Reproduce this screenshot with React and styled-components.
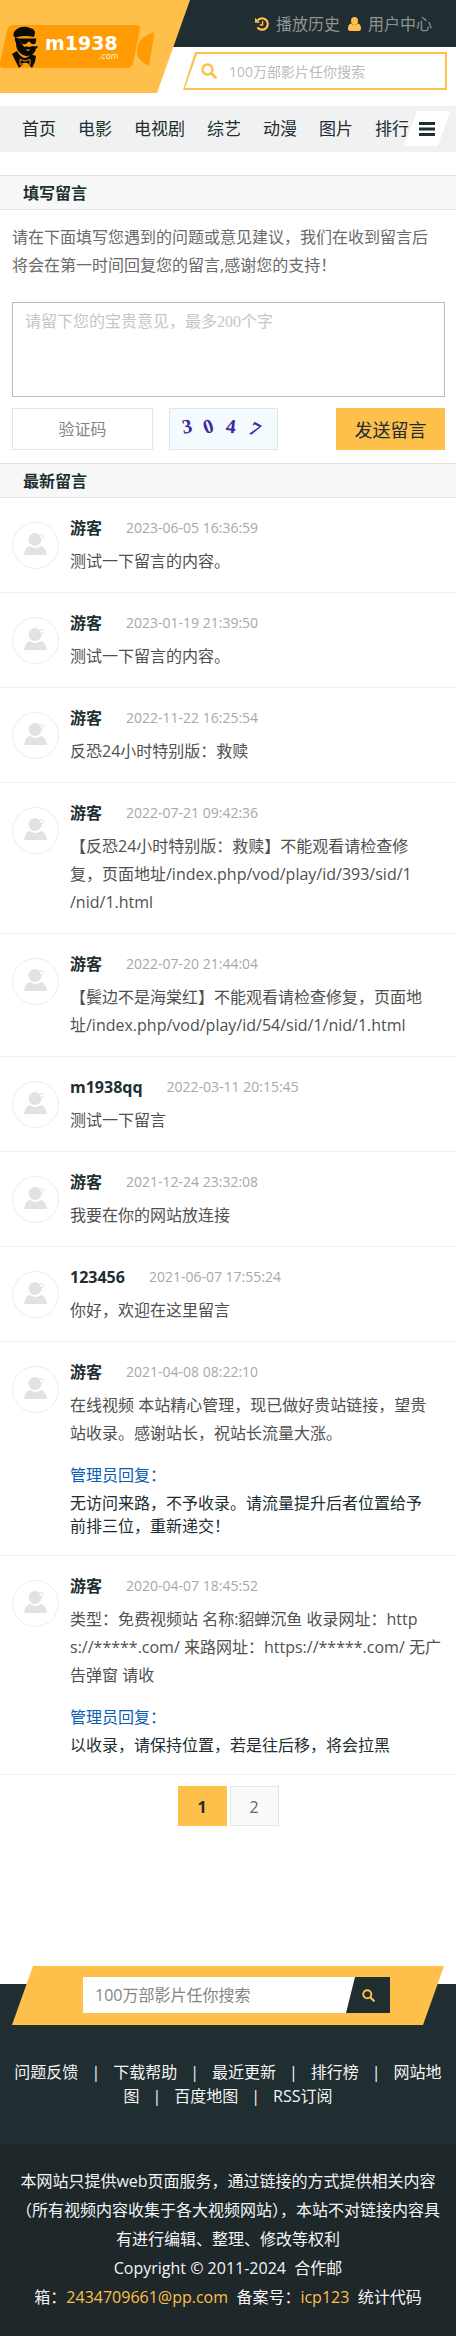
import React from 'react';
import styled, { createGlobalStyle, css } from 'styled-components';

const DARK = '#202d31';
const YELLOW = '#ffbf4b';

const GlobalStyle = createGlobalStyle`
  * {
    box-sizing: border-box;
  }
  body {
    margin: 0;
    background: #fff;
    color: ${DARK};
    font-family: 'Open Sans', 'Noto Sans CJK SC', sans-serif;
    font-size: 16px;
  }
  a {
    color: inherit;
    text-decoration: none;
  }
  button,
  input,
  textarea {
    font: inherit;
    border: 0;
    border-radius: 0;
    outline: 0;
  }
`;

const Header = styled.header`
  display: flex;
  height: 93px;
  background: linear-gradient(${DARK} 47px, #fff 47px);
`;

const LogoLink = styled.a`
  flex: none;
  width: 190px;
  background: ${YELLOW};
  clip-path: polygon(0 0, 100% 0, 157px 100%, 0 100%);
`;

const HeaderSide = styled.div`
  display: flex;
  flex: 1;
  flex-direction: column;
  min-width: 0;
  margin-left: -7px;
  padding-right: 9px;
`;

const UserLinks = styled.div`
  display: flex;
  justify-content: flex-end;
  gap: 8px;
  height: 47px;
  padding-right: 15px;
  color: #8f9494;
  line-height: 48px;
`;

const UserLink = styled.a`
  display: flex;
  align-items: center;
  gap: 7px;
`;

const slant = css`
  clip-path: polygon(12px 0, 100% 0, 100% 100%, 0 100%);
`;

const TopSearch = styled.form`
  display: flex;
  height: 38px;
  margin-top: 5px;
  padding: 2px;
  background: ${YELLOW};
  ${slant}
`;

const TopSearchInner = styled.div`
  display: flex;
  flex: 1;
  align-items: center;
  min-width: 0;
  padding-left: 16px;
  background: #fff;
  ${slant}
`;

const IconButton = styled.button`
  display: flex;
  flex: none;
  align-items: center;
  justify-content: center;
  padding: 0;
  background: none;
`;

const TopInput = styled.input`
  flex: 1;
  min-width: 0;
  padding: 0 12px;
  background: none;
  font-size: 14px;
  &::placeholder {
    color: #bcbcbc;
    opacity: 1;
  }
`;

const Nav = styled.nav`
  position: relative;
  height: 46px;
  margin-top: 13px;
  background: #f1f1f1;
`;

const NavList = styled.div`
  display: flex;
  gap: 22px;
  padding-left: 22px;
  overflow: hidden;
  font-size: 17px;
  line-height: 46px;
  white-space: nowrap;
`;

const MenuButton = styled.button`
  position: absolute;
  top: 5px;
  right: 6px;
  display: flex;
  align-items: center;
  justify-content: center;
  width: 46px;
  height: 35px;
  padding: 0;
  background: #fff;
  clip-path: polygon(13px 0, 100% 0, 34px 100%, 0 100%);
`;

const FormSection = styled.section`
  margin-top: 23px;
`;

const SectionTitle = styled.h2`
  height: 35px;
  margin: 0;
  padding-left: 23px;
  border-top: 1px solid #e2e2e2;
  border-bottom: 1px solid #e2e2e2;
  background: #f8f8f8;
  font-size: 16px;
  line-height: 35px;
`;

const MessageForm = styled.form`
  padding: 13px 11px 13px 12px;
`;

const Tip = styled.p`
  margin: 0;
  color: #6a6a6a;
  line-height: 28px;
  white-space: pre-line;
`;

const Message = styled.textarea`
  display: block;
  width: 100%;
  height: 95px;
  margin: 23px 0 11px;
  padding: 7px 12px;
  border: 1px solid #bdbdbd;
  font-family: 'Liberation Serif', 'Noto Sans CJK SC', serif;
  line-height: 24px;
  resize: none;
  &::placeholder {
    color: #c6c6c6;
    opacity: 1;
  }
`;

const FormRow = styled.div`
  display: flex;
  height: 42px;
`;

const CodeInput = styled.input`
  width: 141px;
  margin-right: 16px;
  border: 1px solid #e5e5e5;
  text-align: center;
  &::placeholder {
    color: #858585;
    opacity: 1;
  }
`;

const Captcha = styled.svg`
  width: 109px;
  height: 42px;
  border: 1px solid #e5e5e5;
  background: #f4fbff;
`;

const SendButton = styled.button`
  width: 109px;
  margin-left: auto;
  padding: 0;
  background: ${YELLOW};
  color: ${DARK};
  font-size: 18px;
`;

const Item = styled.article`
  display: flex;
  gap: 11px;
  padding: 16px 12px 17px;
  border-bottom: 1px solid #f0f0f0;
`;

const Avatar = styled.svg`
  flex: none;
  width: 47px;
  height: 47px;
  margin-top: 8px;
`;

const ItemBody = styled.div`
  flex: 1;
  min-width: 0;
`;

const Meta = styled.div`
  display: flex;
  align-items: center;
  gap: 24px;
  height: 28px;
  margin-bottom: 5px;
`;

const Name = styled.strong`
  line-height: 28px;
`;

const Time = styled.time`
  color: #a8a8a8;
  font-size: 14px;
  line-height: 28px;
`;

const Content = styled.p`
  margin: 0;
  color: #505050;
  line-height: 28px;
  white-space: pre-line;
`;

const ReplyLabel = styled.div`
  margin-top: 14px;
  color: #0c5eb5;
  line-height: 28px;
`;

const Reply = styled.p`
  margin: 3px 0 0;
  line-height: 23px;
  white-space: pre-line;
`;

const Pages = styled.div`
  display: flex;
  justify-content: center;
  gap: 3px;
  padding: 11px 0 140px;
`;

const Page = styled.a`
  width: 49px;
  height: 40px;
  border: 1px solid ${(p) => (p.$active ? YELLOW : '#e5e5e5')};
  background: ${(p) => (p.$active ? YELLOW : '#fafafa')};
  color: ${(p) => (p.$active ? DARK : '#666')};
  font-weight: ${(p) => (p.$active ? 700 : 400)};
  line-height: 40px;
  text-align: center;
`;

const Footer = styled.footer`
  background: linear-gradient(#fff 18px, ${DARK} 18px);
  color: #f4f4f4;
  text-align: center;
`;

const FooterBar = styled.div`
  height: 59px;
  margin: 0 12px;
  padding: 11px 54px 12px 71px;
  background: ${YELLOW};
  clip-path: polygon(21px 0, 100% 0, calc(100% - 21px) 100%, 0 100%);
`;

const FooterSearch = styled.form`
  display: flex;
  height: 36px;
  background: #fff;
`;

const FooterInput = styled.input`
  flex: 1;
  min-width: 0;
  padding: 0 12px;
  background: none;
  &::placeholder {
    color: #858585;
    opacity: 1;
  }
`;

const FooterButton = styled(IconButton)`
  width: 44px;
  background: ${DARK};
  clip-path: polygon(9px 0, 100% 0, 100% 100%, 0 100%);
`;

const FooterLinks = styled.div`
  padding: 35px 0 36px;
  line-height: 24px;
  white-space: nowrap;
`;

const Divider = styled.span`
  padding: 0 13px;
`;

const Legal = styled.div`
  padding: 23px 0 24px;
  background: #1e272a;
  line-height: 29px;
`;

const Highlight = styled.a`
  color: ${YELLOW};
`;

const SearchIcon = ({ size }) => (
  <svg width={size} height={size} viewBox="0 0 16 16" fill="none" stroke={YELLOW} strokeLinecap="round">
    <circle cx="6.5" cy="6.5" r="5" strokeWidth="2.4" />
    <path d="M10.5 10.5 14.5 14.5" strokeWidth="2.8" />
  </svg>
);

const HistoryIcon = () => (
  <svg width="14" height="14" viewBox="0 0 14 14" fill="none" stroke={YELLOW}>
    <path d="M2.6 3.4A5.7 5.7 0 1 1 2.4 10.3" strokeWidth="2.2" />
    <path d="M0 .8v5h5z" fill={YELLOW} stroke="none" />
    <path d="M7.6 4v4H4.8" strokeWidth="1.4" />
  </svg>
);

const UserIcon = () => (
  <svg width="13" height="14" viewBox="0 0 13 14" fill={YELLOW}>
    <ellipse cx="6.5" cy="4" rx="3.5" ry="4" />
    <path d="M3.3 6.4C.8 6.7 0 9 0 11.7 0 13 .9 14 2.2 14h8.6c1.3 0 2.2-1 2.2-2.3 0-2.7-.8-5-3.3-5.3C8.8 7.6 7.8 8 6.5 8s-2.3-.4-3.2-1.6z" />
  </svg>
);

const Logo = () => (
  <svg width="157" height="93" viewBox="0 0 157 93">
    <path
      d="M14 25h122q5 0 4 4l-7 34q-1 5-6 5H4q-5 0-4-5l7-33q2-5 7-5z"
      fill="#ff9b03"
    />
    <path d="M154.5 32 149 66q-8-4-11-9-2-7 0-12 3-9 16.500-13z" fill="#ff9b03" />
    <g fill="#0b0b08">
      {/* cap */}
      <path d="M14 37q-2-5 3-8 6-4 13-1 5 1 5 5l-1 4q-10-2-16 0z" />
      {/* beard */}
      <path d="M15 37q-1 3 1 6 0 7 4 10 5 5 11 2 5-2 5-8l-3-1-4 1-5-1-3-3-3-5z" />
      {/* glasses */}
      <path d="M18 38.500h18.500l-1 5q-4 2-6-2h-1q-2 4-7 2z" />
      {/* cigar */}
      <path d="M30 47.500 37.500 46v2l-6.500 2z" />
      {/* jacket */}
      <path d="M12 54l5-3q4 7 8 7 4-1 6-4l5 2-1 6-3 6-5-5-3 0-5 5-4-8z" />
    </g>
    <path d="M23 44.500q3 1.500 4-1.500l2 0q2 3 4 1.500l-1 1.500-4-.5-4 1.500z" fill="#ff9b03" />
    <path d="M26 49.500h4l-1 1.200h-2z" fill="#ff9b03" />
    <path d="M20 59.500 25 61l5-1.500v5L25 63l-5 1.500z" fill="#0b0b08" stroke="#ff9b03" strokeWidth=".9" />
    <text x="45" y="50" fill="#fff" fontFamily="'DejaVu Sans'" fontWeight="700" fontSize="19">
      m1938
    </text>
    <text x="99" y="59" fill="#fff3dc" fontFamily="'DejaVu Sans'" fontStyle="italic" fontSize="8">
      .com
    </text>
  </svg>
);

const NAV = ['首页', '电影', '电视剧', '综艺', '动漫', '图片', '排行'];

const MESSAGES = [
  { name: '游客', time: '2023-06-05 16:36:59', text: '测试一下留言的内容。' },
  { name: '游客', time: '2023-01-19 21:39:50', text: '测试一下留言的内容。' },
  { name: '游客', time: '2022-11-22 16:25:54', text: '反恐24小时特别版：救赎' },
  {
    name: '游客',
    time: '2022-07-21 09:42:36',
    text: '【反恐24小时特别版：救赎】不能观看请检查修\n复，页面地址/index.php/vod/play/id/393/sid/1\n/nid/1.html',
  },
  {
    name: '游客',
    time: '2022-07-20 21:44:04',
    text: '【鬓边不是海棠红】不能观看请检查修复，页面地\n址/index.php/vod/play/id/54/sid/1/nid/1.html',
  },
  { name: 'm1938qq', time: '2022-03-11 20:15:45', text: '测试一下留言' },
  { name: '游客', time: '2021-12-24 23:32:08', text: '我要在你的网站放连接' },
  { name: '123456', time: '2021-06-07 17:55:24', text: '你好，欢迎在这里留言' },
  {
    name: '游客',
    time: '2021-04-08 08:22:10',
    text: '在线视频 本站精心管理，现已做好贵站链接，望贵\n站收录。感谢站长，祝站长流量大涨。',
    reply: '无访问来路，不予收录。请流量提升后者位置给予\n前排三位，重新递交！',
  },
  {
    name: '游客',
    time: '2020-04-07 18:45:52',
    text: '类型：免费视频站 名称:貂蝉沉鱼 收录网址：http\ns://*****.com/ 来路网址：https://*****.com/ 无广\n告弹窗 请收',
    reply: '以收录，请保持位置，若是往后移，将会拉黑',
  },
];

const MessageItem = ({ message }) => (
  <Item>
    <Avatar viewBox="0 0 47 47">
      <circle cx="23.5" cy="23.5" r="23" fill="#fff" stroke="#ececec" />
      <circle cx="23" cy="17.5" r="6.5" fill="#e2e2e2" />
      <circle cx="29.5" cy="14.5" r="2" fill="#fff" stroke="#e2e2e2" />
      <path d="M12 33q1-8 6-9 5 4 11 0 5 1 6 9z" fill="#e2e2e2" />
    </Avatar>
    <ItemBody>
      <Meta>
        <Name>{message.name}</Name>
        <Time>{message.time}</Time>
      </Meta>
      <Content>{message.text}</Content>
      {message.reply && (
        <>
          <ReplyLabel>管理员回复：</ReplyLabel>
          <Reply>{message.reply}</Reply>
        </>
      )}
    </ItemBody>
  </Item>
);

export default function App() {
  return (
    <>
      <GlobalStyle />
      <Header>
        <LogoLink href="#" aria-label="m1938.com">
          <Logo />
        </LogoLink>
        <HeaderSide>
          <UserLinks>
            <UserLink href="#">
              <HistoryIcon />
              播放历史
            </UserLink>
            <UserLink href="#">
              <UserIcon />
              用户中心
            </UserLink>
          </UserLinks>
          <TopSearch>
            <TopSearchInner>
              <IconButton type="button" aria-label="搜索">
                <SearchIcon size={16} />
              </IconButton>
              <TopInput aria-label="搜索影片" placeholder="100万部影片任你搜索" />
            </TopSearchInner>
          </TopSearch>
        </HeaderSide>
      </Header>
      <Nav>
        <NavList>
          {NAV.map((label) => (
            <a href="#" key={label}>
              {label}
            </a>
          ))}
        </NavList>
        <MenuButton type="button" aria-label="菜单">
          <svg width="16" height="14" viewBox="0 0 16 14" fill={DARK}>
            <path d="M0 0h16v3H0zM0 5.5h16v3H0zM0 11h16v3H0z" />
          </svg>
        </MenuButton>
      </Nav>

      <main>
        <FormSection>
          <SectionTitle>填写留言</SectionTitle>
          <MessageForm>
            <Tip>
              {'请在下面填写您遇到的问题或意见建议，我们在收到留言后\n将会在第一时间回复您的留言,感谢您的支持！'}
            </Tip>
            <Message aria-label="留言内容" placeholder="请留下您的宝贵意见，最多200个字" />
            <FormRow>
              <CodeInput aria-label="验证码" placeholder="验证码" />
              <Captcha viewBox="0 0 107 40" role="img" aria-label="3047">
                <g
                  fill="#3d2ba0"
                  fontFamily="'Liberation Serif'"
                  fontWeight="700"
                  fontSize="20"
                  textAnchor="middle"
                >
                  <text x="17" y="24" transform="rotate(-10 17 17)">3</text>
                  <text x="38" y="24" transform="rotate(-18 38 17)">0</text>
                  <text x="61" y="24" transform="rotate(6 61 17)">4</text>
                  <text x="85" y="27" transform="rotate(28 85 20)">7</text>
                </g>
              </Captcha>
              <SendButton type="button">发送留言</SendButton>
            </FormRow>
          </MessageForm>
        </FormSection>
        <SectionTitle>最新留言</SectionTitle>
        {MESSAGES.map((message) => (
          <MessageItem key={message.time} message={message} />
        ))}
        <Pages>
          <Page href="#" $active>
            1
          </Page>
          <Page href="#">2</Page>
        </Pages>
      </main>

      <Footer>
        <FooterBar>
          <FooterSearch>
            <FooterInput aria-label="搜索影片" placeholder="100万部影片任你搜索" />
            <FooterButton type="button" aria-label="搜索">
              <SearchIcon size={13} />
            </FooterButton>
          </FooterSearch>
        </FooterBar>
        <FooterLinks>
          <a href="#">问题反馈</a>
          <Divider>|</Divider>
          <a href="#">下载帮助</a>
          <Divider>|</Divider>
          <a href="#">最近更新</a>
          <Divider>|</Divider>
          <a href="#">排行榜</a>
          <Divider>|</Divider>
          <a href="#">
            网站地
            <br />图
          </a>
          <Divider>|</Divider>
          <a href="#">百度地图</a>
          <Divider>|</Divider>
          <a href="#">RSS订阅</a>
        </FooterLinks>
        <Legal>
          本网站只提供web页面服务，通过链接的方式提供相关内容
          <br />
          （所有视频内容收集于各大视频网站），本站不对链接内容具
          <br />
          有进行编辑、整理、修改等权利
          <br />
          Copyright © 2011-2024&nbsp; 合作邮
          <br />
          箱：<Highlight href="#">2434709661@pp.com</Highlight>&nbsp; 备案号：
          <Highlight href="#">icp123</Highlight>&nbsp; 统计代码
        </Legal>
      </Footer>
    </>
  );
}
